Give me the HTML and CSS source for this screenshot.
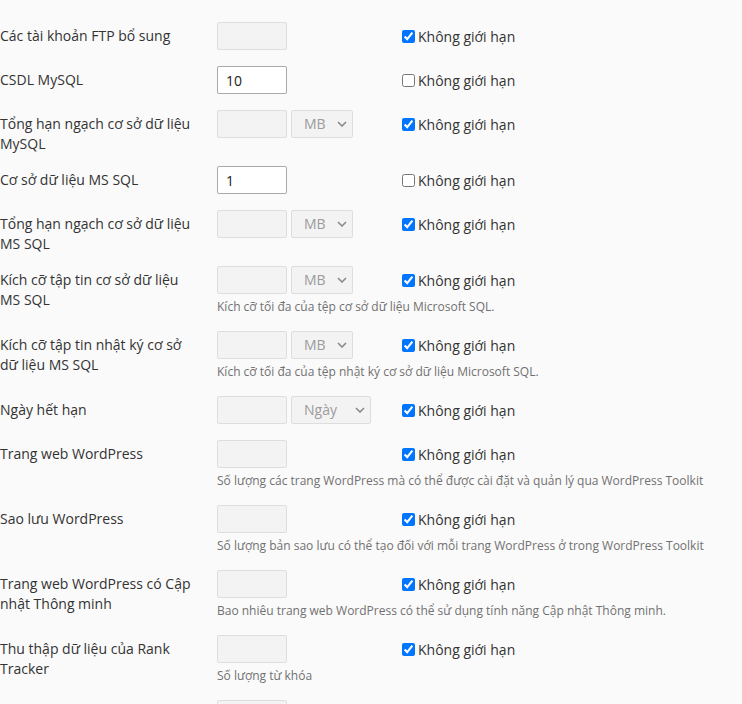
FILE: index.html
```html
<!DOCTYPE html>
<html lang="vi">
<head>
<meta charset="utf-8">
<title>Giới hạn tài nguyên</title>
<link rel="stylesheet" href="styles.css">
</head>
<body>
<div class="form">
  <div class="row">
    <div class="label">Các tài khoản FTP bổ sung</div>
    <div class="field">
      <div class="line">
        <div class="controls"><input class="text" disabled></div>
        <label class="check"><input type="checkbox" checked>Không giới hạn</label>
      </div>
    </div>
  </div>
  <div class="row">
    <div class="label">CSDL MySQL</div>
    <div class="field">
      <div class="line">
        <div class="controls"><input class="text active" value="10"></div>
        <label class="check"><input type="checkbox">Không giới hạn</label>
      </div>
    </div>
  </div>
  <div class="row">
    <div class="label">Tổng hạn ngạch cơ sở dữ liệu MySQL</div>
    <div class="field">
      <div class="line">
        <div class="controls"><input class="text" disabled><div class="select"><span>MB</span><svg width="10" height="6" viewBox="0 0 10 6"><path d="M1 1l4 4 4-4" fill="none" stroke="#8a8a8a" stroke-width="1.6"/></svg></div></div>
        <label class="check"><input type="checkbox" checked>Không giới hạn</label>
      </div>
    </div>
  </div>
  <div class="row">
    <div class="label">Cơ sở dữ liệu MS SQL</div>
    <div class="field">
      <div class="line">
        <div class="controls"><input class="text active" value="1"></div>
        <label class="check"><input type="checkbox">Không giới hạn</label>
      </div>
    </div>
  </div>
  <div class="row">
    <div class="label">Tổng hạn ngạch cơ sở dữ liệu MS SQL</div>
    <div class="field">
      <div class="line">
        <div class="controls"><input class="text" disabled><div class="select"><span>MB</span><svg width="10" height="6" viewBox="0 0 10 6"><path d="M1 1l4 4 4-4" fill="none" stroke="#8a8a8a" stroke-width="1.6"/></svg></div></div>
        <label class="check"><input type="checkbox" checked>Không giới hạn</label>
      </div>
    </div>
  </div>
  <div class="row">
    <div class="label">Kích cỡ tập tin cơ sở dữ liệu MS SQL</div>
    <div class="field">
      <div class="line">
        <div class="controls"><input class="text" disabled><div class="select"><span>MB</span><svg width="10" height="6" viewBox="0 0 10 6"><path d="M1 1l4 4 4-4" fill="none" stroke="#8a8a8a" stroke-width="1.6"/></svg></div></div>
        <label class="check"><input type="checkbox" checked>Không giới hạn</label>
      </div>
      <div class="hint">Kích cỡ tối đa của tệp cơ sở dữ liệu Microsoft SQL.</div>
    </div>
  </div>
  <div class="row">
    <div class="label">Kích cỡ tập tin nhật ký cơ sở dữ liệu MS SQL</div>
    <div class="field">
      <div class="line">
        <div class="controls"><input class="text" disabled><div class="select"><span>MB</span><svg width="10" height="6" viewBox="0 0 10 6"><path d="M1 1l4 4 4-4" fill="none" stroke="#8a8a8a" stroke-width="1.6"/></svg></div></div>
        <label class="check"><input type="checkbox" checked>Không giới hạn</label>
      </div>
      <div class="hint">Kích cỡ tối đa của tệp nhật ký cơ sở dữ liệu Microsoft SQL.</div>
    </div>
  </div>
  <div class="row">
    <div class="label">Ngày hết hạn</div>
    <div class="field">
      <div class="line">
        <div class="controls"><input class="text" disabled><div class="select wide"><span>Ngày</span><svg width="10" height="6" viewBox="0 0 10 6"><path d="M1 1l4 4 4-4" fill="none" stroke="#8a8a8a" stroke-width="1.6"/></svg></div></div>
        <label class="check"><input type="checkbox" checked>Không giới hạn</label>
      </div>
    </div>
  </div>
  <div class="row">
    <div class="label">Trang web WordPress</div>
    <div class="field">
      <div class="line">
        <div class="controls"><input class="text" disabled></div>
        <label class="check"><input type="checkbox" checked>Không giới hạn</label>
      </div>
      <div class="hint">Số lượng các trang WordPress mà có thể được cài đặt và quản lý qua WordPress Toolkit</div>
    </div>
  </div>
  <div class="row">
    <div class="label">Sao lưu WordPress</div>
    <div class="field">
      <div class="line">
        <div class="controls"><input class="text" disabled></div>
        <label class="check"><input type="checkbox" checked>Không giới hạn</label>
      </div>
      <div class="hint">Số lượng bản sao lưu có thể tạo đối với mỗi trang WordPress ở trong WordPress Toolkit</div>
    </div>
  </div>
  <div class="row">
    <div class="label">Trang web WordPress có Cập nhật Thông minh</div>
    <div class="field">
      <div class="line">
        <div class="controls"><input class="text" disabled></div>
        <label class="check"><input type="checkbox" checked>Không giới hạn</label>
      </div>
      <div class="hint">Bao nhiêu trang web WordPress có thể sử dụng tính năng Cập nhật Thông minh.</div>
    </div>
  </div>
  <div class="row">
    <div class="label">Thu thập dữ liệu của Rank Tracker</div>
    <div class="field">
      <div class="line">
        <div class="controls"><input class="text" disabled></div>
        <label class="check"><input type="checkbox" checked>Không giới hạn</label>
      </div>
      <div class="hint">Số lượng từ khóa</div>
    </div>
  </div>
  <div class="row">
    <div class="label"></div>
    <div class="field">
      <div class="line">
        <div class="controls"><input class="text" disabled></div>
      </div>
    </div>
  </div>
</div>
</body>
</html>
```

FILE: styles.css
```css
html, body {
  margin: 0;
  height: 704px;
  overflow: hidden;
}

body {
  background: #fafafa;
  font-family: "Open Sans", "Noto Sans", sans-serif;
  font-size: 14px;
  line-height: 20px;
  color: #333;
}

.form {
  padding-top: 22px;
}

.row {
  display: flex;
  margin-bottom: 12px;
}

.label {
  flex: none;
  width: 199px;
  padding: 4px 18px 0 0;
}

.field {
  display: flex;
  flex-direction: column;
}

.line {
  display: flex;
  align-items: center;
  height: 28px;
  margin-bottom: 4px;
}

.controls {
  flex: none;
  width: 181px;
  display: flex;
  gap: 4px;
}

.text {
  box-sizing: border-box;
  width: 70px;
  height: 28px;
  margin: 0;
  padding: 0 8px;
  border: 1px solid #dedede;
  border-radius: 2px;
  background: #f3f3f3;
  font-family: "Open Sans", sans-serif;
  font-size: 14px;
  color: #222;
  outline: none;
}

.text.active {
  background: #fff;
  border-color: #a9a9a9;
}

.select {
  box-sizing: border-box;
  width: 62px;
  height: 28px;
  display: flex;
  align-items: center;
  justify-content: space-between;
  padding: 0 5px 0 12px;
  border: 1px solid #dedede;
  border-radius: 2px;
  background: #f3f3f3;
  color: #9b9b9b;
}

.select.wide {
  width: 80px;
}

.check {
  display: flex;
  align-items: center;
  padding-top: 1px;
  color: #333;
}

.check input {
  width: 13px;
  height: 13px;
  margin: 3px 3px 3px 4px;
}

.hint {
  font-size: 12px;
  line-height: 16px;
  color: #717171;
  white-space: nowrap;
  padding: 1px 0 4px;
}
```
